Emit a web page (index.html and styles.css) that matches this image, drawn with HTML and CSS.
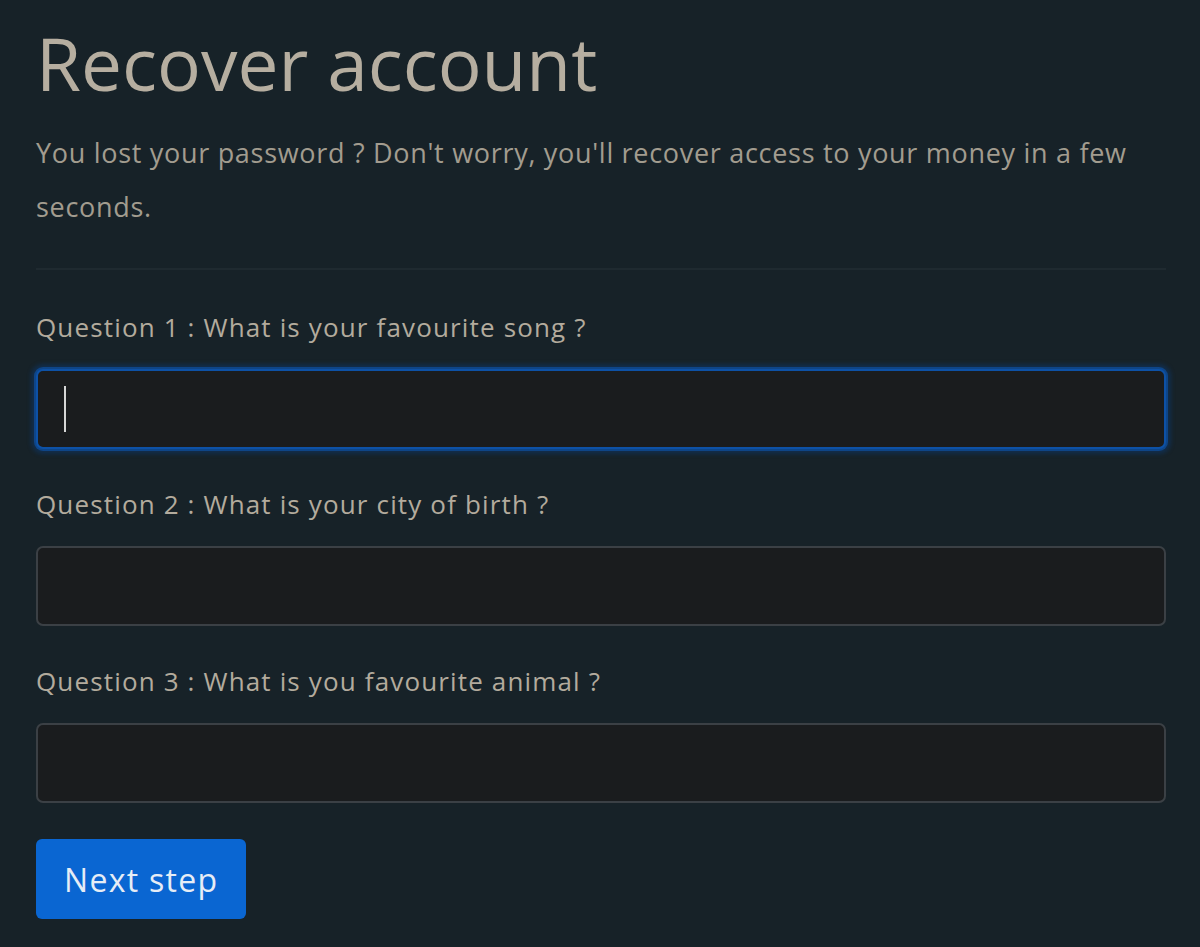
FILE: index.html
```html
<!DOCTYPE html>
<html lang="en">
<head>
<meta charset="utf-8">
<title>Recover account</title>
<link rel="stylesheet" href="styles.css">
</head>
<body>
<main class="page">
  <h1 class="title">Recover account</h1>
  <p class="lead">You lost your password ? Don't worry, you'll recover access to your money in a few seconds.</p>
  <hr class="rule">
  <form class="form">
    <div class="field">
      <label class="label">Question 1 : What is your favourite song ?</label>
      <div class="input focused"><span class="caret"></span></div>
    </div>
    <div class="field">
      <label class="label">Question 2 : What is your city of birth ?</label>
      <div class="input"></div>
    </div>
    <div class="field">
      <label class="label">Question 3 : What is you favourite animal ?</label>
      <div class="input"></div>
    </div>
    <div class="actions">
      <button type="button" class="btn">Next step</button>
    </div>
  </form>
</main>
</body>
</html>
```

FILE: styles.css
```css
html, body {
  margin: 0;
  padding: 0;
  background: #172228;
}
body {
  font-family: "Open Sans", "Noto Sans", sans-serif;
  color: #b3ab9d;
}
.page {
  padding: 13px 34px 0 36px;
}
.title {
  margin: 0;
  font-size: 73px;
  font-weight: 400;
  line-height: 100px;
  color: #b6aea0;
}
.lead {
  margin: 13px 0 0 0;
  font-size: 27px;
  letter-spacing: 0.7px;
  line-height: 54px;
  color: #a29c8f;
}
.rule {
  margin: 34px 0 0 0;
  border: 0;
  border-top: 2px solid #1f2a30;
  height: 0;
}
.form {
  display: flex;
  flex-direction: column;
  margin-top: 37px;
}
.field {
  display: flex;
  flex-direction: column;
  margin-bottom: 35px;
}
.label {
  font-size: 26px;
  letter-spacing: 1.15px;
  line-height: 40px;
  color: #b3ab9d;
  margin-bottom: 22px;
}
.input {
  height: 76px;
  border: 2px solid #3b4045;
  border-radius: 7px;
  background: #1a1c1e;
  display: flex;
  align-items: center;
  padding-left: 26px;
}
.input.focused {
  border-color: #0d51a6;
  box-shadow: 0 0 0 2px rgba(14, 78, 156, 0.75), 0 0 4px 5px rgba(12, 60, 120, 0.45);
}
.caret {
  width: 2px;
  height: 46px;
  background: #d6d6d6;
}
.actions {
  display: flex;
  margin-top: 1px;
}
.btn {
  height: 80px;
  padding: 0 28px;
  border: 0;
  border-radius: 6px;
  background: #0a66d2;
  color: #e6edf6;
  font-family: inherit;
  font-size: 32px;
  letter-spacing: 1.3px;
}
```
